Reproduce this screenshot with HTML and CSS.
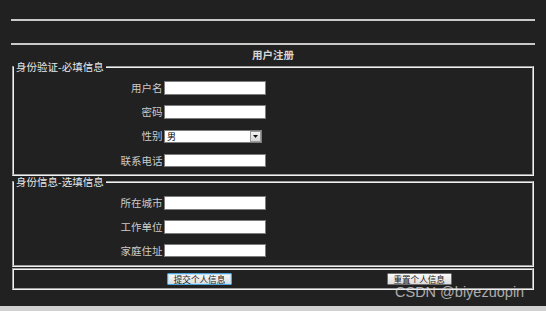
FILE: index.html
```html
<!DOCTYPE html>
<html lang="zh-CN">
<head>
<meta charset="utf-8">
<title>用户注册</title>
<link rel="stylesheet" href="styles.css">
</head>
<body>
<div class="page">
  <div class="rule"></div>
  <div class="rule rule-second"></div>
  <h1 class="title">用户注册</h1>
  <form class="reg">
    <fieldset class="group group-required">
      <legend>身份验证-必填信息</legend>
      <div class="rows">
        <label class="lbl" for="uname">用户名</label>
        <input id="uname" class="txt" type="text">
        <label class="lbl" for="pwd">密码</label>
        <input id="pwd" class="txt" type="password">
        <label class="lbl" for="sex">性别</label>
        <span class="sel-wrap">
          <select id="sex" class="sel"><option>男</option><option>女</option></select>
          <span class="sel-btn"><svg class="sel-arrow" width="5" height="3" viewBox="0 0 5 3"><path d="M0 0H5L2.5 3Z" fill="#111"/></svg></span>
        </span>
        <label class="lbl" for="tel">联系电话</label>
        <input id="tel" class="txt" type="text">
      </div>
    </fieldset>
    <fieldset class="group group-optional">
      <legend>身份信息-选填信息</legend>
      <div class="rows rows-optional">
        <label class="lbl" for="city">所在城市</label>
        <input id="city" class="txt" type="text">
        <label class="lbl" for="work">工作单位</label>
        <input id="work" class="txt" type="text">
        <label class="lbl" for="addr">家庭住址</label>
        <input id="addr" class="txt" type="text">
      </div>
    </fieldset>
    <fieldset class="group group-actions">
      <div class="actions">
        <button type="submit" class="btn btn-primary">提交个人信息</button>
        <button type="reset" class="btn">重置个人信息</button>
      </div>
    </fieldset>
  </form>
  <div class="watermark">CSDN @biyezuopin</div>
</div>
</body>
</html>
```

FILE: styles.css
```css
html {
  background: #d0d0d0;
}

body {
  margin: 0;
  font-family: "Noto Sans CJK SC", "Liberation Sans", sans-serif;
}

.page {
  position: relative;
  height: 306px;
  box-sizing: border-box;
  padding-top: 19px;
  background: #212121;
  overflow: hidden;
}

.rule {
  height: 2px;
  margin: 0 11px;
  background: #c9c9c9;
}

.rule-second {
  margin-top: 22px;
}

.title {
  margin: 4px 0 0;
  font-size: 10.5px;
  line-height: 12px;
  font-weight: bold;
  text-align: center;
  color: #d6d6d6;
}

.reg {
  margin: 0;
}

.group {
  margin: 0 12px;
  padding: 8px 0 6.6px;
  border: 2px groove #f2f2f2;
  min-width: 0;
}

.group legend {
  margin: 0;
  padding: 0 2px;
  font-size: 10.5px;
  line-height: 12px;
  color: #e8e8e8;
}

.group-optional {
  padding: 8.5px 0 8px;
}

.group-actions {
  margin-top: 0.5px;
  padding: 2.8px 0 3.2px;
}

.rows {
  display: grid;
  grid-template-columns: 150px auto;
  row-gap: 10.8px;
  align-items: center;
  justify-items: start;
}

.rows-optional {
  row-gap: 10.2px;
}

.lbl {
  justify-self: stretch;
  padding-right: 1.5px;
  text-align: right;
  font-size: 10.5px;
  line-height: 12px;
  color: #cbcbcb;
}

.txt {
  width: 102px;
  height: 13.5px;
  box-sizing: border-box;
  margin: 0;
  padding: 0 2px;
  border: 1px solid #7c7c7c;
  border-radius: 0;
  background: #fff;
  font-size: 9px;
}

.sel-wrap {
  position: relative;
  display: block;
  width: 98px;
  height: 13.5px;
}

.sel {
  appearance: none;
  -webkit-appearance: none;
  display: block;
  width: 100%;
  height: 100%;
  box-sizing: border-box;
  margin: 0;
  padding: 0 0 0 2px;
  border: 1px solid #7c7c7c;
  border-radius: 0;
  background: #fff;
  color: #000;
  font-family: "Noto Sans CJK SC", sans-serif;
  font-size: 9px;
  line-height: 11px;
}

.sel-btn {
  position: absolute;
  top: 1.3px;
  right: 1px;
  bottom: 1.3px;
  width: 11px;
  box-sizing: border-box;
  display: flex;
  align-items: center;
  justify-content: center;
  border: 1px solid #9a9a9a;
  background: linear-gradient(#f2f2f2, #d6d6d6);
  pointer-events: none;
}

.sel-arrow {
  display: block;
}

.actions {
  display: flex;
  gap: 154.7px;
  padding-left: 153px;
}

.btn {
  width: 65px;
  height: 12px;
  box-sizing: border-box;
  margin: 0;
  padding: 0;
  border: 1px solid #707070;
  border-radius: 1px;
  background: linear-gradient(#fbfbfb, #dcdcdc);
  color: #1a1a1a;
  font-family: "Noto Sans CJK SC", sans-serif;
  font-size: 8.6px;
  line-height: 10px;
}

.btn-primary {
  border-color: #4fa3d8;
  box-shadow: inset 0 0 0 1px #bfe3f7;
}

.watermark {
  position: absolute;
  left: 395px;
  top: 285px;
  font-family: "Liberation Sans", Arial, sans-serif;
  font-size: 14.5px;
  line-height: 14.5px;
  color: rgba(228, 228, 228, 0.72);
  white-space: nowrap;
}
```
